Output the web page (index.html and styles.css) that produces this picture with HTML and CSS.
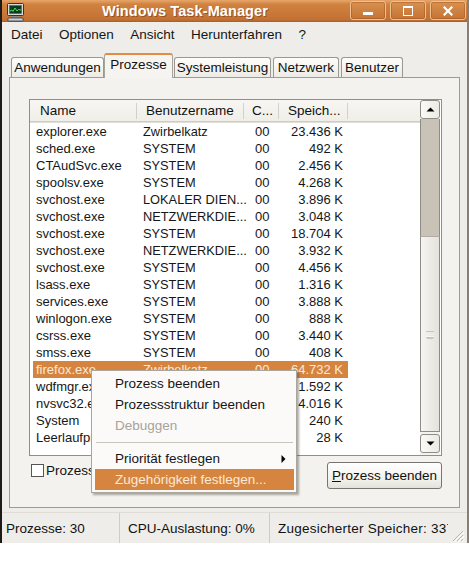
FILE: index.html
```html
<!DOCTYPE html>
<html>
<head>
<meta charset="utf-8">
<link rel="stylesheet" href="styles.css">
</head>
<body>
<div class="window">
  <div class="titlebar">
    <svg class="appicon" width="20" height="20" viewBox="0 0 20 20">
      <rect x="1.5" y="1.5" width="16" height="12" rx="1" fill="#d8d8d8" stroke="#333" stroke-width="1"/>
      <rect x="3.5" y="3.5" width="12" height="8" fill="#0b3a1c" stroke="#555" stroke-width="0.5"/>
      <polyline points="4,9 6,8 7,9.5 9,6 11,9 12.5,7.5 15,8" fill="none" stroke="#3fe060" stroke-width="1"/>
      <rect x="5" y="14" width="9" height="2" fill="#888"/>
      <rect x="2" y="16" width="15" height="3" rx="0.5" fill="#d0d0d0" stroke="#333" stroke-width="0.8"/>
    </svg>
    <div class="title">Windows Task-Manager</div>
    <div class="tbtns">
      <div class="tbtn"><span class="g-min"></span></div>
      <div class="tbtn"><span class="g-max"></span></div>
      <div class="tbtn"><svg width="10" height="10" viewBox="0 0 10 10"><path d="M1.5 1.5 L8.5 8.5 M8.5 1.5 L1.5 8.5" stroke="#fff" stroke-width="2.2" stroke-linecap="square"/></svg></div>
    </div>
  </div>
  <div class="menubar">
    <span>Datei</span><span>Optionen</span><span>Ansicht</span><span>Herunterfahren</span><span>?</span>
  </div>
  <div class="tabarea">
    <div class="tabstrip">
      <div class="tab t1">Anwendungen</div>
      <div class="tab t2 active">Prozesse</div>
      <div class="tab t3">Systemleistung</div>
      <div class="tab t4">Netzwerk</div>
      <div class="tab t5">Benutzer</div>
    </div>
    <div class="panel">
      <div class="listview">
        <div class="listmain">
          <div class="lvheader">
            <div class="hc c-name">Name</div>
            <div class="hc c-user">Benutzername</div>
            <div class="hc c-cpu">C...</div>
            <div class="hc c-mem">Speich...</div>
          </div>
          <div class="rows">
            <div class="row"><span class="c-name">explorer.exe</span><span class="c-user">Zwirbelkatz</span><span class="c-cpu">00</span><span class="c-mem">23.436 K</span></div>
            <div class="row"><span class="c-name">sched.exe</span><span class="c-user">SYSTEM</span><span class="c-cpu">00</span><span class="c-mem">492 K</span></div>
            <div class="row"><span class="c-name">CTAudSvc.exe</span><span class="c-user">SYSTEM</span><span class="c-cpu">00</span><span class="c-mem">2.456 K</span></div>
            <div class="row"><span class="c-name">spoolsv.exe</span><span class="c-user">SYSTEM</span><span class="c-cpu">00</span><span class="c-mem">4.268 K</span></div>
            <div class="row"><span class="c-name">svchost.exe</span><span class="c-user">LOKALER DIEN...</span><span class="c-cpu">00</span><span class="c-mem">3.896 K</span></div>
            <div class="row"><span class="c-name">svchost.exe</span><span class="c-user">NETZWERKDIE...</span><span class="c-cpu">00</span><span class="c-mem">3.048 K</span></div>
            <div class="row"><span class="c-name">svchost.exe</span><span class="c-user">SYSTEM</span><span class="c-cpu">00</span><span class="c-mem">18.704 K</span></div>
            <div class="row"><span class="c-name">svchost.exe</span><span class="c-user">NETZWERKDIE...</span><span class="c-cpu">00</span><span class="c-mem">3.932 K</span></div>
            <div class="row"><span class="c-name">svchost.exe</span><span class="c-user">SYSTEM</span><span class="c-cpu">00</span><span class="c-mem">4.456 K</span></div>
            <div class="row"><span class="c-name">lsass.exe</span><span class="c-user">SYSTEM</span><span class="c-cpu">00</span><span class="c-mem">1.316 K</span></div>
            <div class="row"><span class="c-name">services.exe</span><span class="c-user">SYSTEM</span><span class="c-cpu">00</span><span class="c-mem">3.888 K</span></div>
            <div class="row"><span class="c-name">winlogon.exe</span><span class="c-user">SYSTEM</span><span class="c-cpu">00</span><span class="c-mem">888 K</span></div>
            <div class="row"><span class="c-name">csrss.exe</span><span class="c-user">SYSTEM</span><span class="c-cpu">00</span><span class="c-mem">3.440 K</span></div>
            <div class="row"><span class="c-name">smss.exe</span><span class="c-user">SYSTEM</span><span class="c-cpu">00</span><span class="c-mem">408 K</span></div>
            <div class="row sel"><span class="c-name">firefox.exe</span><span class="c-user">Zwirbelkatz</span><span class="c-cpu">00</span><span class="c-mem">64.732 K</span></div>
            <div class="row"><span class="c-name">wdfmgr.exe</span><span class="c-user">SYSTEM</span><span class="c-cpu">00</span><span class="c-mem">1.592 K</span></div>
            <div class="row"><span class="c-name">nvsvc32.exe</span><span class="c-user">SYSTEM</span><span class="c-cpu">00</span><span class="c-mem">4.016 K</span></div>
            <div class="row"><span class="c-name">System</span><span class="c-user">SYSTEM</span><span class="c-cpu">00</span><span class="c-mem">240 K</span></div>
            <div class="row"><span class="c-name">Leerlaufprozess</span><span class="c-user">SYSTEM</span><span class="c-cpu">00</span><span class="c-mem">28 K</span></div>
          </div>
        </div>
        <div class="scrollbar">
          <div class="sbtn"><svg width="9" height="5" viewBox="0 0 9 5"><path d="M0.5 4.5 L4.5 0.5 L8.5 4.5 Z" fill="#000"/></svg></div>
          <div class="track"></div>
          <div class="thumb"><span class="grip"></span></div>
          <div class="sbtn down"><svg width="9" height="5" viewBox="0 0 9 5"><path d="M0.5 0.5 L4.5 4.5 L8.5 0.5 Z" fill="#000"/></svg></div>
        </div>
      </div>
      <div class="bottomrow">
        <div class="chk"><span class="box"></span><span>Prozesse aller Benutzer anzeigen</span></div>
        <div class="btn"><u>P</u>rozess beenden</div>
      </div>
    </div>
  </div>
  <div class="statusbar">
    <div class="sp sp1">Prozesse: 30</div>
    <div class="sp sp2">CPU-Auslastung: 0%</div>
    <div class="sp sp3">Zugesicherter Speicher: 337</div>
    <svg class="grip-r" width="14" height="14" viewBox="0 0 14 14">
      <path d="M13 3 L3 13 M13 7 L7 13 M13 11 L11 13" stroke="#b8b4aa" stroke-width="1"/>
      <path d="M14 4 L4 14 M14 8 L8 14 M14 12 L12 14" stroke="#fff" stroke-width="1"/>
    </svg>
  </div>
  <div class="ctxmenu">
    <div class="mi">Prozess beenden</div>
    <div class="mi">Prozessstruktur beenden</div>
    <div class="mi dis">Debuggen</div>
    <div class="msep"></div>
    <div class="mi sub">Priorität festlegen<svg class="arrow" width="5" height="8" viewBox="0 0 5 8"><path d="M0.5 0 L4.5 4 L0.5 8 Z" fill="#000"/></svg></div>
    <div class="mi hl">Zugehörigkeit festlegen...</div>
  </div>
</div>
</body>
</html>
```
FILE: styles.css
```css
html, body {
  margin: 0;
  padding: 0;
  background: #ffffff;
}
body {
  font-family: "Liberation Sans", Arial, sans-serif;
  font-size: 13px;
  color: #111;
}
.window {
  position: relative;
  width: 469px;
  height: 543px;
  background: #eeede9;
  border-left: 2px solid #1e1a16;
  border-right: 2px solid #8a7f72;
  box-sizing: border-box;
  overflow: hidden;
}
.titlebar {
  height: 22px;
  display: flex;
  align-items: center;
  background: linear-gradient(to bottom, #e7a66b 0%, #d0823f 20%, #c9783a 60%, #c27133 90%, #a85e28 100%);
  margin-left: -2px;
  margin-right: -2px;
  padding-left: 6px;
}
.appicon {
  flex: none;
  margin-top: 1px;
}
.title {
  margin-left: 76px;
  color: #fff;
  font-weight: bold;
  font-size: 14.5px;
  text-shadow: 1px 1px 0 rgba(120, 60, 20, 0.6);
  letter-spacing: 0.1px;
}
.tbtns {
  margin-left: auto;
  display: flex;
  gap: 4px;
  margin-right: 3px;
  align-self: flex-start;
  margin-top: 1px;
}
.tbtn {
  width: 34px;
  height: 17px;
  border: 1px solid #f0c090;
  border-radius: 3px;
  background: linear-gradient(to bottom, #d9904e, #c47436);
  box-shadow: inset 0 0 0 1px rgba(140, 70, 20, 0.35);
  display: flex;
  align-items: center;
  justify-content: center;
}
.g-min {
  width: 10px;
  height: 3px;
  background: #fff;
  margin-top: 6px;
}
.g-max {
  width: 8px;
  height: 7px;
  border: 1px solid #fff;
  border-top-width: 2px;
}
.menubar {
  height: 24px;
  display: flex;
  align-items: center;
  gap: 16.5px;
  padding-left: 9px;
  font-size: 13.5px;
  color: #151515;
}
.tabarea {
  padding: 7px 0 0 7px;
}
.tabstrip {
  display: flex;
  align-items: flex-end;
  height: 24px;
  padding-left: 2px;
  position: relative;
  z-index: 2;
}
.tab {
  height: 20px;
  border: 1px solid #9a9890;
  border-bottom: none;
  border-radius: 3px 3px 0 0;
  background: linear-gradient(to bottom, #fdfdfb, #ecebe5);
  display: flex;
  align-items: center;
  justify-content: center;
  box-sizing: border-box;
  margin-bottom: 0;
  font-size: 13.5px;
}
.t1 { width: 93px; margin-right: 0; }
.t2 { width: 69px; }
.t3 { width: 97px; margin-left: 1px; }
.t4 { width: 66px; margin-left: 2px; }
.t5 { width: 62px; margin-left: 2px; }
.tab.active {
  height: 25px;
  border-top: 2px solid #e08a40;
  background: #f5f4f0;
  margin-bottom: -1px;
  padding-bottom: 4px;
  border-color: #a8a59c;
  border-top-color: #e38b42;
}
.panel {
  width: 451px;
  height: 431px;
  box-sizing: border-box;
  border: 1px solid #9d9b94;
  background: #f3f2ee;
  padding: 21px 0 0 19px;
}
.listview {
  width: 413px;
  height: 357px;
  box-sizing: border-box;
  border: 1px solid #8e8e8a;
  background: #fff;
  display: flex;
}
.listmain {
  flex: 1;
  overflow: hidden;
}
.lvheader {
  height: 22px;
  display: flex;
  align-items: center;
  background: linear-gradient(to bottom, #f7f6f2, #efeee9);
  border-bottom: 1px solid #cfccc4;
  box-shadow: 0 1px 0 #e2dfd8;
  box-sizing: border-box;
  font-size: 13.5px;
}
.hc {
  height: 16px;
  line-height: 16px;
  border-right: 1px solid #d3d0c8;
  box-sizing: border-box;
}
.lvheader .c-name { width: 107px; padding-left: 10px; }
.lvheader .c-user { width: 107px; padding-left: 9px; }
.lvheader .c-cpu { width: 35px; padding-left: 8px; }
.lvheader .c-mem { width: 69px; padding-left: 9px; }
.rows {
  padding-top: 1px;
}
.row {
  display: flex;
  height: 17px;
  line-height: 17px;
  width: 315px;
  margin-left: 3px;
  color: #161616;
  white-space: nowrap;
}
.row span { display: block; box-sizing: border-box; }
.row .c-name { width: 104px; padding-left: 3px; overflow: hidden; }
.row .c-user { width: 107px; padding-left: 6px; font-size: 12.8px; }
.row .c-cpu { width: 35px; padding-left: 11px; }
.row .c-mem { width: 69px; text-align: right; padding-right: 5px; }
.row.sel {
  background: #d4843f;
  color: #fbe8d6;
}
.scrollbar {
  width: 20px;
  flex: none;
  display: flex;
  flex-direction: column;
  margin-right: 1px;
  background: #f4f3ef;
}
.sbtn {
  height: 19px;
  flex: none;
  box-sizing: border-box;
  border: 1px solid #8f8c85;
  border-radius: 3px;
  background: linear-gradient(to right, #fbfaf7, #eceae3);
  display: flex;
  align-items: center;
  justify-content: center;
}
.track {
  height: 117px;
  flex: none;
  background: #c9c2b6;
  border-left: 1px solid #8f8c85;
  border-right: 1px solid #8f8c85;
}
.thumb {
  flex: 1;
  border: 1px solid #8f8c85;
  border-top-color: #b0aca4;
  background: linear-gradient(to right, #f6f5f2, #e4e2dc);
  display: flex;
  align-items: center;
  justify-content: center;
  margin-bottom: 2px;
}
.grip {
  width: 8px;
  height: 5px;
  border-top: 1px solid #c8c5bd;
  border-bottom: 1px solid #c8c5bd;
  position: relative;
  top: 0;
  box-shadow: inset 0 -1px 0 0 #f6f6f6, 0 2px 0 -1px #c8c5bd;
}
.sbtn.down {
  margin-bottom: 2px;
}
.bottomrow {
  display: flex;
  align-items: flex-start;
  margin-top: 6px;
  width: 413px;
}
.chk {
  display: flex;
  align-items: center;
  gap: 2px;
  margin-top: 1px;
  margin-left: 2px;
  font-size: 13.5px;
  white-space: nowrap;
}
.box {
  width: 13px;
  height: 13px;
  box-sizing: border-box;
  border: 1px solid #555;
  background: #fff;
}
.btn {
  margin-left: auto;
  width: 115px;
  height: 27px;
  box-sizing: border-box;
  border: 1px solid #77756f;
  border-radius: 3px;
  background: linear-gradient(to bottom, #ffffff, #f1efea 70%, #e4e1da);
  display: flex;
  align-items: center;
  justify-content: center;
  font-size: 13.5px;
}
.btn u { text-decoration: underline; }
.statusbar {
  position: relative;
  margin-top: 4px;
  height: 31px;
  display: flex;
  align-items: center;
  font-size: 13.5px;
  border-top: 1px solid #e0ddd6;
}
.sp {
  height: 100%;
  display: flex;
  align-items: center;
  box-sizing: border-box;
  white-space: nowrap;
  overflow: hidden;
}
.sp1 { width: 118px; padding-left: 4px; border-right: 1px solid #d0cdc6; }
.sp2 { width: 150px; padding-left: 8px; border-right: 1px solid #d0cdc6; }
.sp3 { width: 178px; padding-left: 8px; letter-spacing: 0.25px; }
.grip-r {
  position: absolute;
  right: 3px;
  bottom: 2px;
}
.ctxmenu {
  position: absolute;
  left: 89px;
  top: 370px;
  width: 206px;
  box-sizing: border-box;
  background: #fbfaf8;
  border: 1px solid #a9a69e;
  padding: 2px 2px 2px 3px;
  box-shadow: 2px 2px 2px rgba(80, 70, 60, 0.45);
  z-index: 5;
}
.mi {
  height: 21px;
  line-height: 21px;
  padding-left: 20px;
  font-size: 13.5px;
  color: #151515;
  position: relative;
  white-space: nowrap;
}
.mi.dis { color: #a6a39c; }
.mi.hl {
  background: #d5853f;
  color: #fbe9d8;
}
.msep {
  height: 1px;
  background: #c8c5bd;
  margin: 6px 1px 5px 1px;
}
.arrow {
  position: absolute;
  right: 8px;
  top: 7px;
}
```
